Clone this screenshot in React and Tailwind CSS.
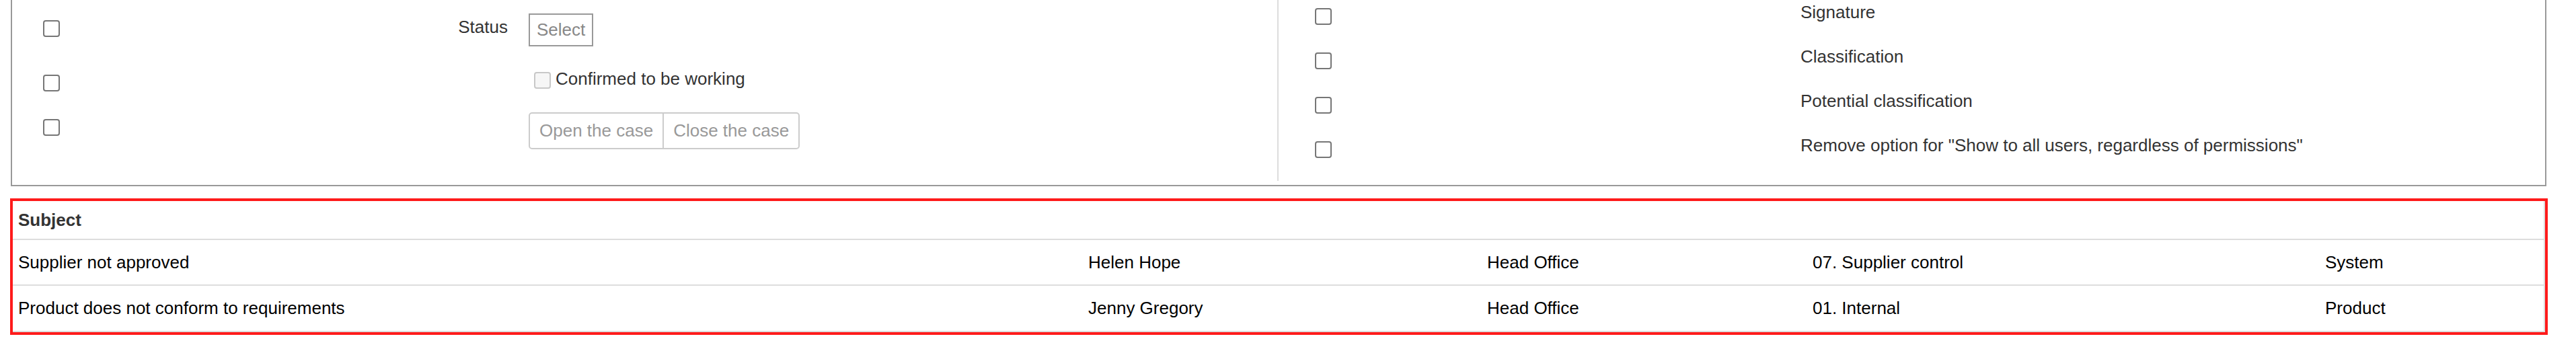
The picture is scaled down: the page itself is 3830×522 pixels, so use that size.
import React from "react";

function Box({ disabled = false, className = "" }) {
  return (
    <span
      className={
        "block w-[25px] h-[25px] shrink-0 rounded-[4px] border-2 " +
        (disabled ? "border-[#c8c8c8] bg-[#f6f6f6] " : "border-[#767676] bg-white ") +
        className
      }
    />
  );
}

const rightItems = [
  "Signature",
  "Classification",
  "Potential classification",
  'Remove option for "Show to all users, regardless of permissions"',
];

const rows = [
  ["Supplier not approved", "Helen Hope", "Head Office", "07. Supplier control", "System"],
  ["Product does not conform to requirements", "Jenny Gregory", "Head Office", "01. Internal", "Product"],
];

export default function App() {
  return (
    <div className="w-[3830px] h-[522px] bg-white font-['Liberation_Sans',Arial,sans-serif] text-[26px] leading-[36px] text-[#333]">
      {/* Top panel */}
      <div className="ml-[16px] w-[3770px] h-[277px] border-x-2 border-b-2 border-[#999] flex items-start">
        {/* Left column */}
        <div className="w-[1881px] flex flex-col">
          <div className="h-[92px] flex items-start">
            <Box className="ml-[46px] mt-[30px]" />
            <div className="w-[666px] mt-[22px] text-right">Status</div>
            <div className="ml-[31px] mt-[20px] border-2 border-[#999] pl-[10px] pr-[10px] pt-[4px] pb-[5px] text-[#888]">
              Select
            </div>
          </div>
          <div className="h-[66px] flex items-start">
            <Box className="ml-[46px] mt-[19px]" />
            <div className="ml-[705px] flex items-start">
              <Box disabled className="mt-[15px]" />
              <span className="ml-[7px] mt-[7px] text-[#333]">Confirmed to be working</span>
            </div>
          </div>
          <div className="h-[111px] flex items-start">
            <Box className="ml-[46px] mt-[19px]" />
            <div className="ml-[697px] mt-[9px] flex border-2 border-[#ccc] rounded-[5px] text-[#999]">
              <span className="pl-[14px] pr-[14px] pt-[7px] pb-[8px]">Open the case</span>
              <span className="border-l-2 border-[#ccc] pl-[14px] pr-[14px] pt-[7px] pb-[8px]">Close the case</span>
            </div>
          </div>
        </div>
        {/* Divider */}
        <div className="w-[2px] h-[269px] bg-[#ddd]" />
        {/* Right column */}
        <div className="flex-1 flex flex-col">
          {rightItems.map((t) => (
            <div key={t} className="h-[66px] flex items-start">
              <Box className="ml-[54px] mt-[12px]" />
              <span className="ml-[697px] text-[#333]">{t}</span>
            </div>
          ))}
        </div>
      </div>

      {/* Highlighted table */}
      <div className="mt-[18px] ml-[15px] w-[3773px] border-4 border-[#fe1b1b]">
        <div className="border-r-2 border-[#ddd]">
          <div className="grid grid-cols-[1591px_593px_484px_762px_1fr] border-b-2 border-[#ddd]">
            <div className="pl-[8px] py-[10px] font-bold text-[#333]">Subject</div>
            <div />
            <div />
            <div />
            <div />
          </div>
          {rows.map((r, i) => (
            <div
              key={i}
              className={
                "grid grid-cols-[1591px_593px_484px_762px_1fr] border-b-2 border-[#ddd] text-black " +
                (i === 0 ? "h-[68px]" : "h-[69px]")
              }
            >
              {r.map((c, j) => (
                <div key={j} className="pl-[8px] pt-[15px]">
                  {c}
                </div>
              ))}
            </div>
          ))}
        </div>
      </div>
    </div>
  );
}
